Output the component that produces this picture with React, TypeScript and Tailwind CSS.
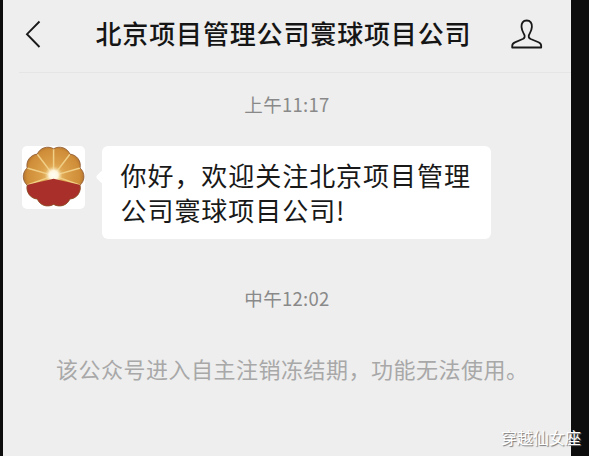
import { clsx } from "clsx";

const PETALS = 10;
const NOTCH_RADIUS = 27.8;

function polar(radius: number, degrees: number) {
  const rad = (degrees * Math.PI) / 180;
  return `${(radius * Math.cos(rad)).toFixed(2)} ${(radius * Math.sin(rad)).toFixed(2)}`;
}

// Scalloped outline, one arc per petal
const flowerPath =
  `M${polar(NOTCH_RADIUS, -90)}` +
  Array.from(
    { length: PETALS },
    (_, i) => `A11.4 11.4 0 0 1 ${polar(NOTCH_RADIUS, -90 + (i + 1) * 36)}`
  ).join("") +
  "Z";

const rayAngles = [-198, -162, -126, -90, -54, -18, 18];

function Avatar() {
  return (
    <div className="flex h-[63px] w-[63px] shrink-0 items-center justify-center rounded-[5px] bg-white">
      <svg viewBox="-31.5 -31.5 63 63" className="h-[63px] w-[63px]">
        <defs>
          <radialGradient id="gold" gradientUnits="userSpaceOnUse" cx="0" cy="-1" r="31">
            <stop offset="0" stopColor="#eccb83" />
            <stop offset="0.4" stopColor="#dca04a" />
            <stop offset="0.85" stopColor="#cf8d38" />
            <stop offset="1" stopColor="#b0722e" />
          </radialGradient>
          <radialGradient id="sun" gradientUnits="userSpaceOnUse" cx="0" cy="-1.5" r="9">
            <stop offset="0" stopColor="#fffdf4" />
            <stop offset="0.5" stopColor="#fff6de" />
            <stop offset="1" stopColor="#f3d591" stopOpacity="0" />
          </radialGradient>
          <clipPath id="flower">
            <path d={flowerPath} />
          </clipPath>
        </defs>
        <g transform="translate(0.1 -0.9)">
          <g clipPath="url(#flower)">
            <rect x="-32" y="-32" width="64" height="64" fill="url(#gold)" />
            {rayAngles.map((angle) => (
              <path
                key={angle}
                d={`M0 -1L${polar(28, angle)}`}
                stroke="#f0cf86"
                strokeWidth="1.5"
              />
            ))}
            <circle cx="0" cy="-1.5" r="9" fill="url(#sun)" />
            <path d="M-32 9.5L-26 8.2L0 2.2L26 8.2L32 9.5V32H-32Z" fill="#a9302a" />
          </g>
          <path d={flowerPath} fill="none" stroke="#8c552d" strokeWidth="0.8" />
        </g>
      </svg>
    </div>
  );
}

function Header() {
  return (
    <header className="flex h-[73px] items-center pb-[5px]">
      <svg viewBox="0 0 16 28" className="ml-[22px] h-7 w-4 shrink-0" fill="none">
        <path d="M14.5 1.5L2 14.2L14.5 27" stroke="#191919" strokeWidth="1.9" />
      </svg>
      <h1 className="mb-[3px] ml-[54.5px] whitespace-nowrap text-[26px] leading-9 font-medium tracking-[0.85px] text-[#151515]">
        北京项目管理公司寰球项目公司
      </h1>
      <svg viewBox="0 0 32 30" className="ml-[40px] h-[30px] w-8 shrink-0" fill="none">
        <path
          d="M15.7 1.5C11.9 1.5 10.3 4.3 10.5 7.9C10.7 11.5 12.2 13.6 13.2 15.5C14.2 17.4 13.7 19.1 11.7 20L3.9 23.3C2.1 24.1 1.2 25 1.2 27V28.5H30.2V27C30.2 25 29.3 24.1 27.5 23.3L19.7 20C17.7 19.1 17.2 17.4 18.2 15.5C19.2 13.6 20.7 11.5 20.9 7.9C21.1 4.3 19.5 1.5 15.7 1.5Z"
          stroke="#191919"
          strokeWidth="1.8"
          strokeLinejoin="round"
        />
      </svg>
    </header>
  );
}

function TimeStamp({ children, className }: { children: string; className?: string }) {
  return (
    <p
      className={clsx(
        "text-center text-[18.5px] leading-6 tracking-[0.3px] text-[#898989]",
        className
      )}
    >
      {children}
    </p>
  );
}

export default function App() {
  return (
    <div className="relative flex h-[456px] w-[589px] overflow-hidden bg-[#0d0d0d] pl-[3px] font-['Noto_Sans_CJK_SC',sans-serif]">
      <main className="h-full w-[568px] bg-[#eeeeee]">
        <Header />
        <div className="-mt-px ml-4 h-px bg-[#e5e5e5]" />

        <TimeStamp className="mt-[19px]">上午11:17</TimeStamp>

        {/* Message row */}
        <div className="mt-[30px] flex items-start pl-[19px]">
          <Avatar />
          <div className="relative ml-[17px] h-[93px] w-[389px] rounded-[6px] bg-white pt-[11px] pl-[18.5px]">
            <div className="absolute top-[25px] -left-[4px] h-3 w-3 rotate-45 rounded-[2px] bg-white" />
            <p className="relative text-[26px] leading-[35px] tracking-[0.95px] whitespace-nowrap text-[#191919]">
              你好，欢迎关注北京项目管理
              <br />
              公司寰球项目公司!
            </p>
          </div>
        </div>

        <TimeStamp className="mt-[47px]">中午12:02</TimeStamp>

        <p className="mt-[42px] pl-[53px] text-[22px] leading-8 tracking-[0.5px] whitespace-nowrap text-[#a8a8a8]">
          该公众号进入自主注销冻结期，功能无法使用。
        </p>
      </main>

      <span className="absolute right-[8px] bottom-[7px] text-[16px] leading-6 whitespace-nowrap text-white [text-shadow:1px_1px_1px_#777]">
        穿越仙女座
      </span>
    </div>
  );
}
